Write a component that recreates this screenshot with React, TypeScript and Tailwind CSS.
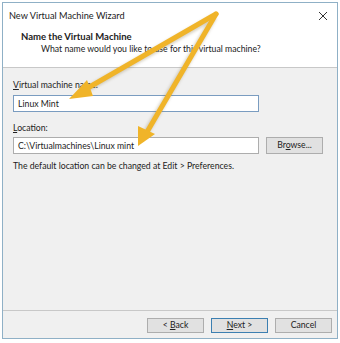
import React from "react";

function Btn({ children, primary }: { children: React.ReactNode; primary?: boolean }) {
  return (
    <button
      className={
        primary
          ? "h-[15px] w-[57px] border border-[#3c7fb1] bg-[#e1e1e1] text-[8.7px] leading-none text-[#222]"
          : "h-[15px] w-[57px] border border-[#adadad] bg-[#e1e1e1] text-[8.7px] leading-none text-[#222]"
      }
    >
      {children}
    </button>
  );
}

export default function App() {
  return (
    <div className="relative h-[343px] w-[340px] bg-white font-['Lato',sans-serif] text-[#222]">
      <div className="absolute inset-x-[2px] top-[2px] bottom-[4px] flex flex-col border border-[#8fb0c6] bg-[#f0f0f0]">
        <div className="h-[65px] border-b border-[#c8c8c8] bg-white">
          <div className="flex h-[24px] items-center justify-between pl-[6px] pr-[9px] pt-[1px]">
            <span className="text-[9.2px]">New Virtual Machine Wizard</span>
            <svg width="10" height="10" viewBox="0 0 10 10">
              <path d="M1 1 L9 9 M9 1 L1 9" stroke="#333" strokeWidth="1" />
            </svg>
          </div>
          <div className="pl-[18px] pt-[4px] text-[9.5px] font-bold leading-[12px]">
            Name the Virtual Machine
          </div>
          <div className="pl-[38px] text-[8.7px] leading-[12px]">
            What name would you like to use for this virtual machine?
          </div>
        </div>

        <div className="flex flex-1 flex-col px-[10px] pt-[11px]">
          <div className="text-[8.7px] leading-[12px]">
            <u>V</u>irtual machine name:
          </div>
          <div className="mt-[4px] flex h-[17px] w-[246px] items-center border border-[#7a9cc0] bg-white pl-[4px] text-[8.7px]">
            Linux Mint
          </div>

          <div className="mt-[10px] text-[8.7px] leading-[12px]">
            <u>L</u>ocation:
          </div>
          <div className="mt-[3px] flex items-center gap-[7px]">
            <div className="flex h-[17px] w-[246px] items-center border border-[#adadad] bg-white pl-[4px] text-[8.7px]">
              C:\Virtualmachines\Linux mint
            </div>
            <button className="h-[17px] w-[57px] border border-[#adadad] bg-[#e1e1e1] text-[8.7px] leading-none">
              Br<u>o</u>wse...
            </button>
          </div>
          <div className="mt-[6px] text-[8.7px] leading-[12px]">
            The default location can be changed at Edit &gt; Preferences.
          </div>
        </div>

        <div className="flex h-[28px] items-start justify-end gap-[7px] border-t border-[#c8c8c8] pr-[5px] pt-[7px]">
          <Btn>
            &lt; <u>B</u>ack
          </Btn>
          <Btn primary>
            <u>N</u>ext &gt;
          </Btn>
          <Btn>Cancel</Btn>
        </div>
      </div>

      <svg className="pointer-events-none absolute inset-0" width="340" height="343" viewBox="0 0 340 343">
        <defs>
          <filter id="sh" x="-20%" y="-20%" width="140%" height="140%">
            <feGaussianBlur stdDeviation="1.5" />
          </filter>
        </defs>
        <g stroke="#8a7a50" strokeWidth="6" fill="none" opacity="0.35" filter="url(#sh)">
          <path d="M214 17 L82 92" />
          <path d="M214 17 L144 136" />
        </g>
        <g stroke="#f0b429" strokeWidth="5" fill="none" strokeLinecap="round">
          <path d="M216 14 L86 89" />
          <path d="M216 14 L147 132" />
        </g>
        <polygon points="69,99 87,80 93,96" fill="#f0b429" />
        <polygon points="138,146 138,126 155,134" fill="#f0b429" />
      </svg>
    </div>
  );
}
